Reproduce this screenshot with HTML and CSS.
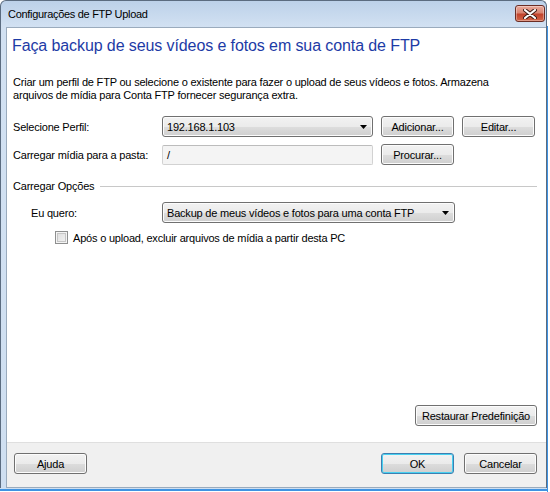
FILE: index.html
```html
<!DOCTYPE html>
<html lang="pt">
<head>
<meta charset="utf-8">
<title>Configurações de FTP Upload</title>
<link rel="stylesheet" href="styles.css">
</head>
<body>
<div class="window">
  <div class="titlebar">
    <span class="title">Configurações de FTP Upload</span>
    <span class="close">
      <svg width="14" height="10" viewBox="0 0 14 10"><path d="M2 1 L12 9 M12 1 L2 9" stroke="#3b1a14" stroke-width="4" stroke-linecap="round"/><path d="M2 1 L12 9 M12 1 L2 9" stroke="#ffffff" stroke-width="2.2" stroke-linecap="round"/></svg>
    </span>
  </div>
  <div class="panel">
    <div class="main">
      <h1 class="heading">Faça backup de seus vídeos e fotos em sua conta de FTP</h1>
      <p class="desc">Criar um perfil de FTP ou selecione o existente para fazer o upload de seus vídeos e fotos. Armazena arquivos de mídia para Conta FTP fornecer segurança extra.</p>
      <div class="form">
        <div class="row">
          <span class="label">Selecione Perfil:</span>
          <div class="combo combo-profile"><span>192.168.1.103</span><svg class="arrow" width="7" height="4" viewBox="0 0 7 4"><path d="M0 0 H7 L3.5 4 Z" fill="#000"/></svg></div>
          <button class="btn">Adicionar...</button>
          <button class="btn">Editar...</button>
        </div>
        <div class="row">
          <span class="label">Carregar mídia para a pasta:</span>
          <div class="textbox">/</div>
          <button class="btn">Procurar...</button>
        </div>
      </div>
      <div class="section">
        <span class="section-title">Carregar Opções</span>
        <span class="section-line"></span>
      </div>
      <div class="row row-indent">
        <span class="label label-indent">Eu quero:</span>
        <div class="combo combo-want"><span>Backup de meus vídeos e fotos para uma conta FTP</span><svg class="arrow" width="7" height="4" viewBox="0 0 7 4"><path d="M0 0 H7 L3.5 4 Z" fill="#000"/></svg></div>
      </div>
      <label class="check-row">
        <span class="checkbox"></span>
        <span>Após o upload, excluir arquivos de mídia a partir desta PC</span>
      </label>
      <div class="restore-wrap">
        <button class="btn btn-restore">Restaurar Predefinição</button>
      </div>
    </div>
    <div class="footer">
      <button class="btn">Ajuda</button>
      <div class="footer-right">
        <button class="btn btn-default">OK</button>
        <button class="btn">Cancelar</button>
      </div>
    </div>
  </div>
</div>
<div class="edge"></div>
</body>
</html>
```

FILE: styles.css
```css
html, body {
  margin: 0;
  padding: 0;
}
body {
  width: 550px;
  height: 492px;
  display: flex;
  background: #ffffff;
  font-family: "Liberation Sans", Arial, sans-serif;
  font-size: 11px;
  letter-spacing: -0.2px;
  color: #000;
  overflow: hidden;
}
.window {
  width: 547px;
  height: 488px;
  box-sizing: border-box;
  border: 1px solid #5b6c80;
  border-bottom: none;
  border-radius: 6px 6px 0 0;
  background: linear-gradient(to bottom, #bcd1e9 0, #d2e1f2 26px, #cfdff1 100%);
  display: flex;
  flex-direction: column;
  padding-left: 5px;
  box-shadow: 0 1px 0 #cfdff1, 0 3px 0 #3f93e2;
}
.edge {
  width: 3px;
  margin-top: 26px;
  height: 466px;
  border-left: 1px solid #3f93e2;
  box-sizing: border-box;
}
.titlebar {
  height: 26px;
  display: flex;
  justify-content: space-between;
  align-items: flex-start;
  padding-left: 2px;
  padding-right: 1px;
}
.title {
  font-size: 11px;
  letter-spacing: -0.3px;
  line-height: 14px;
  margin-top: 6px;
  color: #000;
}
.close {
  width: 30px;
  height: 17px;
  margin-top: 4px;
  box-sizing: border-box;
  border: 1px solid #6b2d25;
  border-radius: 3px;
  background: linear-gradient(to bottom, #e9a99b 0%, #d98673 45%, #c2432c 55%, #d2674a 100%);
  display: flex;
  align-items: center;
  justify-content: center;
  box-shadow: inset 0 0 0 1px rgba(255,255,255,0.35);
}
.panel {
  flex: 1;
  display: flex;
  flex-direction: column;
  border-top: 1px solid #9aabbd;
  border-left: 1px solid #9aabbd;
  border-bottom: 1px solid #9aabbd;
  background: #ffffff;
}
.main {
  flex: 1;
  display: flex;
  flex-direction: column;
  padding: 8px 9px 0 6px;
}
.heading {
  margin: 0 0 0 -1px;
  font-weight: normal;
  font-size: 16px;
  letter-spacing: -0.1px;
  line-height: 20px;
  color: #1d3ba6;
}
.desc {
  margin: 20px 0 0 0;
  line-height: 13px;
  width: 482px;
}
.form {
  margin-top: 14px;
  display: flex;
  flex-direction: column;
  gap: 7px;
}
.row {
  display: flex;
  align-items: center;
  height: 21px;
  gap: 8px;
}
.label {
  width: 141px;
  flex: none;
}
.label-indent {
  padding-left: 18px;
  width: 123px;
}
.btn {
  font-family: "Liberation Sans", Arial, sans-serif;
  font-size: 11px;
  letter-spacing: -0.2px;
  color: #000;
  height: 21px;
  width: 73px;
  padding: 0;
  box-sizing: border-box;
  border: 1px solid #707070;
  border-radius: 3px;
  background: linear-gradient(to bottom, #f2f2f2 0%, #ebebeb 50%, #dddddd 51%, #cfcfcf 100%);
  box-shadow: inset 0 0 0 1px #fcfcfc;
  flex: none;
}
.combo {
  height: 21px;
  box-sizing: border-box;
  border: 1px solid #707070;
  border-radius: 3px;
  background: linear-gradient(to bottom, #f2f2f2 0%, #ebebeb 50%, #dddddd 51%, #cfcfcf 100%);
  box-shadow: inset 0 0 0 1px #fcfcfc;
  display: flex;
  align-items: center;
  justify-content: space-between;
  padding: 0 5px 0 4px;
  flex: none;
}
.combo-profile {
  width: 211px;
}
.combo-want {
  width: 293px;
}
.arrow {
  flex: none;
}
.textbox {
  width: 211px;
  height: 20px;
  box-sizing: border-box;
  border: 1px solid #d2d2d2;
  border-top-color: #bcbcbc;
  border-radius: 2px;
  background: #f4f4f4;
  padding-left: 4px;
  line-height: 18px;
  flex: none;
}
.section {
  margin-top: 14px;
  display: flex;
  align-items: center;
  height: 14px;
  gap: 6px;
}
.section-line {
  flex: 1;
  height: 1px;
  background: #c8c8c8;
  margin-top: 1px;
}
.row-indent {
  margin-top: 9px;
}
.check-row {
  margin-top: 8px;
  display: flex;
  align-items: center;
  gap: 5px;
  padding-left: 42px;
  height: 13px;
}
.checkbox {
  width: 13px;
  height: 13px;
  box-sizing: border-box;
  border: 1px solid #8e8f8f;
  background: linear-gradient(135deg, #dcdcdc 0%, #f4f4f4 100%);
  box-shadow: inset 0 0 0 1px #f4f4f4, inset 0 0 0 2px #c6c6c6;
  flex: none;
}
.restore-wrap {
  flex: 1;
  display: flex;
  align-items: flex-end;
  justify-content: flex-end;
  padding-bottom: 16px;
}
.btn-restore {
  width: 122px;
}
.footer {
  height: 45px;
  box-sizing: border-box;
  border-top: 1px solid #dfdfdf;
  background: #f0f0f0;
  display: flex;
  justify-content: space-between;
  align-items: flex-start;
  padding: 10px 9px 0 7px;
}
.footer-right {
  display: flex;
  gap: 10px;
}
.btn-default {
  border-color: #3c7fb1;
  box-shadow: inset 0 0 0 1px #48d0f0;
}
```
